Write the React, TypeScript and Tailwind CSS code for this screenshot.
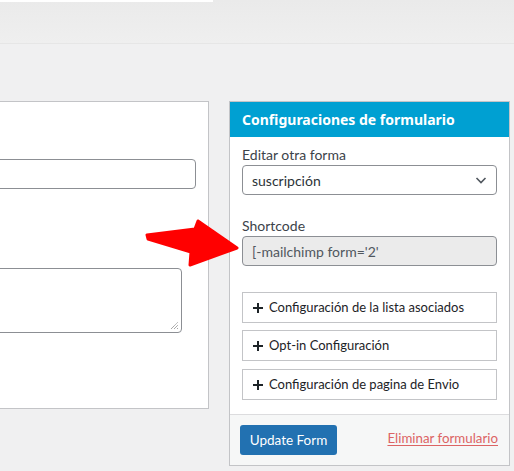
import React from "react";

const font = { fontFamily: 'Lato, "Noto Sans", sans-serif' };
const headFont = { fontFamily: '"Noto Sans", sans-serif' };

function Accordion({ label }: { label: string }) {
  return (
    <div className="flex h-[31px] items-center border border-[#c3c4c7] bg-white pl-[10px] text-[13px] text-[#1d2327]">
      <svg className="mr-[6px]" width="10" height="10" viewBox="0 0 10 10">
        <path d="M0 5 H10 M5 0 V10" stroke="#1d2327" strokeWidth="2" />
      </svg>
      {label}
    </div>
  );
}

export default function App() {
  return (
    <div
      className="relative h-[471px] w-[514px] overflow-hidden bg-[#f0f0f1]"
      style={font}
    >
      {/* top strip */}
      <div className="relative h-[44px] border-b border-[#e6e6e6] bg-gradient-to-b from-[#eaeaea] to-[#efefef]">
        <div className="h-[2px] w-[213px] bg-white" />
      </div>

      <div className="mt-[57px] flex items-start">
        {/* left panel */}
        <div className="h-[308px] w-[209px] border border-l-0 border-[#c3c4c7] bg-white">
          <div className="-ml-[4px] mt-[57px] h-[30px] w-[200px] rounded-[4px] border border-[#8c8f94] bg-white" />
          <div className="relative -ml-[4px] mt-[79px] h-[65px] w-[186px] rounded-[4px] border border-[#8c8f94] bg-white">
            <svg className="absolute bottom-[2px] right-[2px]" width="9" height="9" viewBox="0 0 9 9">
              <path d="M1 8 L8 1 M4 8 L8 4 M7 8 L8 7" stroke="#777" strokeWidth="0.9" strokeDasharray="1 0.6" />
            </svg>
          </div>
        </div>

        {/* right panel */}
        <div className="ml-[20px] w-[281px] border border-[#c3c4c7] bg-white">
          <div
            className="flex h-[35px] items-center bg-[#00a0d2] px-[12px] text-[14px] font-bold text-white"
            style={headFont}
          >
            Configuraciones de formulario
          </div>
          <div className="px-[12px] pb-[14px] pt-[9px]">
            <div className="text-[14px] leading-[18px] text-[#3c434a]">Editar otra forma</div>
            <div className="mt-[1px] flex h-[30px] items-center justify-between rounded-[4px] border border-[#8c8f94] pl-[9px] pr-[8px] text-[14px] text-[#2c3338]">
              <span>suscripción</span>
              <svg width="14" height="14" viewBox="0 0 14 14" fill="none">
                <path d="M2.5 5 L7 9.5 L11.5 5" stroke="#50575e" strokeWidth="1.6" />
              </svg>
            </div>
            <div className="mt-[22px] text-[14px] leading-[18px] text-[#3c434a]">Shortcode</div>
            <div className="mt-[1px] flex h-[30px] items-center rounded-[4px] border border-[#8c8f94] bg-[#ebebeb] pl-[9px] text-[14px] text-[#50575e]">
              [-mailchimp form='2'
            </div>
            <div className="mt-[26px] flex flex-col gap-[7px]">
              <Accordion label="Configuración de la lista asociados" />
              <Accordion label="Opt-in Configuración" />
              <div className="mt-[1px]">
                <Accordion label="Configuración de pagina de Envio" />
              </div>
            </div>
          </div>
          <div className="flex h-[51px] items-center justify-between border-t border-[#dcdcde] bg-[#f6f7f7] pl-[10px] pr-[11px]">
            <button className="h-[30px] w-[97px] rounded-[3px] bg-[#2271b1] text-[13.5px] text-white">
              Update Form
            </button>
            <a className="mb-[3px] text-[13.3px] text-[#dc6464] underline underline-offset-2" href="#">
              Eliminar formulario
            </a>
          </div>
        </div>
      </div>

      {/* red arrow */}
      <svg className="absolute left-0 top-0" width="514" height="471" viewBox="0 0 514 471">
        <polygon
          points="147,235 195,229 198,221 237,248 190,265 191,252 148,239"
          fill="#ff0000"
          stroke="#ff0000"
          strokeWidth="3"
          strokeLinejoin="round"
        />
      </svg>
    </div>
  );
}
